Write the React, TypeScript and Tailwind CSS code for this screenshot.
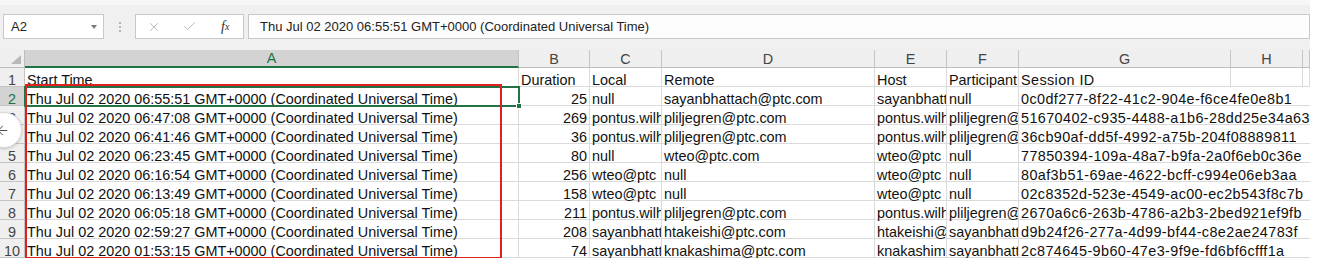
import { X, Check, ArrowLeft } from "lucide-react";

const cols = [
  { key: "A", w: "w-[494px]" },
  { key: "B", w: "w-[71px]" },
  { key: "C", w: "w-[72px]" },
  { key: "D", w: "w-[213px]" },
  { key: "E", w: "w-[72px]" },
  { key: "F", w: "w-[72px]" },
  { key: "G", w: "w-[212px]" },
  { key: "H", w: "w-[72px]" },
  { key: "", w: "w-[7px]" },
];

const ts = (t: string) => `Thu Jul 02 2020 ${t} GMT+0000 (Coordinated Universal Time)`;

// narrow cells hold only what the sheet shows before the next cell cuts them
const rows: string[][] = [
  ["Start Time", "Duration", "Local", "Remote", "Host", "Participant", "Session ID"],
  [ts("06:55:51"), "25", "null", "sayanbhattach@ptc.com", "sayanbhatt", "null", "0c0df277-8f22-41c2-904e-f6ce4fe0e8b1"],
  [ts("06:47:08"), "269", "pontus.wilh", "pliljegren@ptc.com", "pontus.wilh", "pliljegren@", "51670402-c935-4488-a1b6-28dd25e34a63"],
  [ts("06:41:46"), "36", "pontus.wilh", "pliljegren@ptc.com", "pontus.wilh", "pliljegren@", "36cb90af-dd5f-4992-a75b-204f08889811"],
  [ts("06:23:45"), "80", "null", "wteo@ptc.com", "wteo@ptc", "null", "77850394-109a-48a7-b9fa-2a0f6eb0c36e"],
  [ts("06:16:54"), "256", "wteo@ptc", "null", "wteo@ptc", "null", "80af3b51-69ae-4622-bcff-c994e06eb3aa"],
  [ts("06:13:49"), "158", "wteo@ptc", "null", "wteo@ptc", "null", "02c8352d-523e-4549-ac00-ec2b543f8c7b"],
  [ts("06:05:18"), "211", "pontus.wilh", "pliljegren@ptc.com", "pontus.wilh", "pliljegren@", "2670a6c6-263b-4786-a2b3-2bed921ef9fb"],
  [ts("02:59:27"), "208", "sayanbhatt", "htakeishi@ptc.com", "htakeishi@", "sayanbhatt", "d9b24f26-277a-4d99-bf44-c8e2ae24783f"],
  [ts("01:53:15"), "74", "sayanbhatt", "knakashima@ptc.com", "knakashim", "sayanbhatt", "2c874645-9b60-47e3-9f9e-fd6bf6cfff1a"],
];

function Cell({ col, text, row }: { col: number; text?: string; row: number }) {
  const c = cols[col];
  const isNum = col === 1 && row > 0;
  const isG = col === 6;
  // G overflows into H (empty) from row 2 down, so no gridline there
  const spill = row > 0 && (col === 6 || col === 7 || col === 8);
  return (
    <div
      className={`${c.w} shrink-0 h-[19px] border-b border-[#dadada] ${spill ? "" : "border-r"} pt-[3px] leading-[19px] whitespace-nowrap ${
        isG ? "overflow-visible tracking-[0.4px]" : "overflow-x-clip"
      } ${isNum ? "text-right pr-[2px]" : "pl-[2px]"}`}
    >
      {text}
    </div>
  );
}

export default function App() {
  return (
    <div className="w-[1318px] h-[264px] bg-white overflow-hidden font-['Liberation_Sans',Arial,sans-serif] relative">
      <div className="w-[1310px] overflow-hidden">
        {/* formula bar */}
        <div className="h-[5px] bg-[#f7f7f7]" />
        <div className="h-[45px] bg-[#f0f0f0] pt-[9px] pl-[3px] flex items-start text-[#222]">
          <div className="w-[101px] h-[25px] bg-white border border-[#c8c8c8] flex items-center justify-between pl-[7px] pr-[6px] text-[13px]">
            <span>A2</span>
            <span className="w-0 h-0 border-l-[3px] border-r-[3px] border-t-[4px] border-l-transparent border-r-transparent border-t-[#7a7a7a]" />
          </div>
          <div className="w-[31px] h-[25px] flex flex-col items-center justify-center gap-[2px]">
            <span className="w-[2px] h-[2px] bg-[#b5b5b5]" />
            <span className="w-[2px] h-[2px] bg-[#b5b5b5]" />
            <span className="w-[2px] h-[2px] bg-[#b5b5b5]" />
          </div>
          <div className="w-[109px] h-[25px] bg-white border border-[#c8c8c8] flex items-center">
            <span className="w-[36px] flex justify-center text-[#a8a8a8]">
              <X size={14} strokeWidth={1.3} />
            </span>
            <span className="w-[36px] flex justify-center text-[#a8a8a8]">
              <Check size={15} strokeWidth={1.3} />
            </span>
            <span className="w-[36px] flex justify-center font-['Liberation_Serif',serif] italic text-[14px] text-[#333]">
              f<span className="text-[10px] mt-[3px]">x</span>
            </span>
          </div>
          <div className="ml-[4px] w-[1062px] h-[25px] bg-[#fdfdfd] border border-[#c8c8c8] flex items-center pl-[11px] text-[13px] text-[#222]">
            {ts("06:55:51")}
          </div>
        </div>

        {/* sheet */}
        <div className="relative text-[14.4px] text-[#111]">
          {/* column headers */}
          <div className="flex h-[18px] bg-[#efefef] text-[#444]">
            <div className="w-[25px] shrink-0 border-r border-b border-[#bdbdbd] relative">
              <span className="absolute right-[3px] bottom-[3px] w-0 h-0 [border-bottom:9px_solid_#b9b9b9] [border-left:10px_solid_transparent]" />
            </div>
            {cols.map((c, i) => (
              <div
                key={i}
                className={`${c.w} shrink-0 border-r border-[#c4c4c4] flex items-center justify-center leading-none pt-[1px] ${
                  i === 0 ? "bg-[#d3d3d3] text-[#217346] border-b-2 border-b-[#217346]" : "border-b border-b-[#bdbdbd]"
                }`}
              >
                {c.key}
              </div>
            ))}
          </div>

          {/* body rows */}
          {rows.map((r, ri) => (
            <div key={ri} className="flex">
              <div
                className={`w-[25px] shrink-0 h-[19px] border-r border-b border-[#c4c4c4] text-center pt-[3px] leading-[19px] ${
                  ri === 1 ? "bg-[#d3d3d3] text-[#217346]" : "bg-[#efefef] text-[#444]"
                }`}
              >
                {ri + 1}
              </div>
              {cols.map((_, ci) => (
                <Cell key={ci} col={ci} row={ri} text={r[ci]} />
              ))}
            </div>
          ))}

          {/* active cell A2 */}
          <div className="absolute left-[24px] top-[36px] w-[496px] h-[21px] border-2 border-[#217346]" />
          <div className="absolute left-[516px] top-[53px] w-[6px] h-[6px] bg-[#217346] border border-white" />

          {/* annotation box */}
          <div className="absolute left-[25px] top-[34px] w-[477px] h-[175px] border-2 border-[#e0201e]" />
        </div>
      </div>

      {/* back button overlay */}
      <div className="absolute left-[-14px] top-[112px] w-[36px] h-[36px] rounded-full bg-white border border-[#d8d8d8] shadow-[0_1px_3px_rgba(0,0,0,0.18)] flex items-center justify-end pr-[11px] text-[#333]">
        <ArrowLeft size={15} strokeWidth={1.4} />
      </div>
    </div>
  );
}
